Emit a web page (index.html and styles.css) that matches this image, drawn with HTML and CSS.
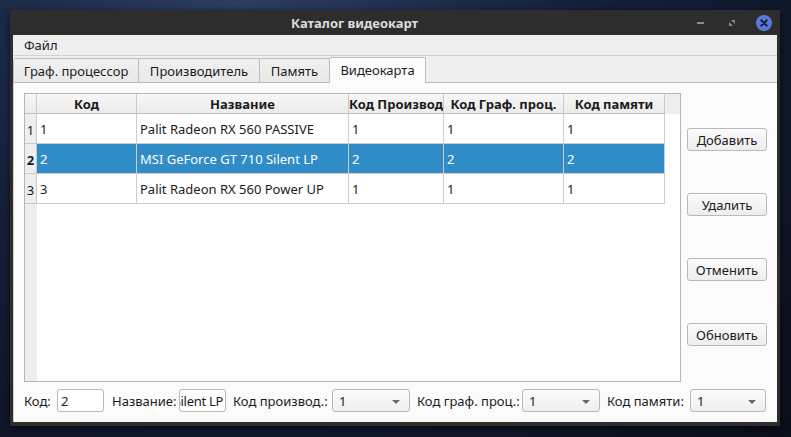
FILE: index.html
```html
<!DOCTYPE html>
<html lang="ru">
<head>
<meta charset="utf-8">
<title>Каталог видеокарт</title>
<link rel="stylesheet" href="styles.css">
</head>
<body>
<div class="window">
  <div class="titlebar">
    <span class="title">Каталог видеокарт</span>
    <div class="wctl">
      <span class="wmin"></span>
      <svg class="wmax" width="8" height="8" viewBox="0 0 8 8"><path d="M1 7 L1 3 L5 7 Z M7 1 L7 5 L3 1 Z" fill="#8a8a8a"/></svg>
      <span class="wclose"><svg width="16" height="16" viewBox="0 0 16 16"><path d="M5.2 5.2 L10.8 10.8 M10.8 5.2 L5.2 10.8" stroke="#1e2540" stroke-width="2" stroke-linecap="round"/></svg></span>
    </div>
  </div>
  <div class="client">
    <div class="menubar"><span>Файл</span></div>
    <div class="tabbar">
      <div class="tab t1">Граф. процессор</div>
      <div class="tab t2">Производитель</div>
      <div class="tab t3">Память</div>
      <div class="tab t4 active">Видеокарта</div>
    </div>
    <div class="panel">
      <div class="main">
        <div class="grid">
          <div class="hc corner"></div>
          <div class="hc">Код</div>
          <div class="hc">Название</div>
          <div class="hc">Код Производ</div>
          <div class="hc">Код Граф. проц.</div>
          <div class="hc">Код памяти</div>
          <div class="hc filler"></div>

          <div class="vh">1</div>
          <div class="c">1</div>
          <div class="c">Palit Radeon RX 560 PASSIVE</div>
          <div class="c">1</div>
          <div class="c">1</div>
          <div class="c">1</div>
          <div class="blank"></div>

          <div class="vh cur">2</div>
          <div class="c sel">2</div>
          <div class="c sel">MSI GeForce GT 710 Silent LP</div>
          <div class="c sel">2</div>
          <div class="c sel">2</div>
          <div class="c sel">2</div>
          <div class="blank"></div>

          <div class="vh">3</div>
          <div class="c">3</div>
          <div class="c">Palit Radeon RX 560 Power UP</div>
          <div class="c">1</div>
          <div class="c">1</div>
          <div class="c">1</div>
          <div class="blank"></div>
        </div>
        <div class="buttons">
          <button class="btn">Добавить</button>
          <button class="btn">Удалить</button>
          <button class="btn">Отменить</button>
          <button class="btn">Обновить</button>
        </div>
      </div>
      <div class="form">
        <label class="lbl l-code">Код:</label>
        <input class="field f-code" type="text" value="2" readonly>
        <label class="lbl l-name">Название:</label>
        <input class="field f-name" type="text" dir="rtl" value="MSI GeForce GT 710 Silent LP" readonly>
        <label class="lbl l-man">Код производ.:</label>
        <div class="combo c-man">1<span class="arrow"></span></div>
        <label class="lbl l-gpu">Код граф. проц.:</label>
        <div class="combo c-gpu">1<span class="arrow"></span></div>
        <label class="lbl l-mem">Код памяти:</label>
        <div class="combo c-mem">1<span class="arrow"></span></div>
      </div>
    </div>
  </div>
</div>
</body>
</html>
```

FILE: styles.css
```css
* { box-sizing: border-box; }

body {
  margin: 0;
  width: 791px;
  height: 437px;
  overflow: hidden;
  font-family: "Noto Sans", "Open Sans", sans-serif;
  font-size: 13px;
  color: #1b1b1b;
  background:
    radial-gradient(circle at 20% 30%, rgba(120,150,200,0.25) 0 1px, transparent 2px),
    radial-gradient(ellipse at 30% 0%, #2c3f63 0%, #15203a 45%, #0b0f1a 100%);
}

.window {
  margin: 10px 0 0 10px;
  width: 770px;
  height: 416px;
  background: #2d2d2d;
  display: flex;
  flex-direction: column;
  box-shadow: 0 2px 8px rgba(0,0,0,0.6);
}

.titlebar {
  height: 25px;
  display: flex;
  align-items: center;
  color: #dcdcdc;
  font-weight: bold;
  font-size: 13px;
}

.title { margin-left: 281px; }

.wctl {
  margin-left: auto;
  display: flex;
  align-items: center;
  padding-right: 8px;
}

.wmin {
  width: 7px;
  height: 2px;
  background: #8a8a8a;
  margin-right: 24px;
}

.wmax { margin-right: 20px; }

.wclose {
  width: 16px;
  height: 16px;
  border-radius: 50%;
  background: #5b78d8;
  display: flex;
}

.client {
  flex: 1;
  margin: 0 3px 4px 3px;
  background: #efefef;
  display: flex;
  flex-direction: column;
}

.menubar {
  height: 21px;
  padding-left: 11px;
  display: flex;
  align-items: center;
  border-bottom: 1px solid #d2d2d2;
}

.tabbar {
  height: 26px;
  display: flex;
  align-items: flex-end;
  position: relative;
  z-index: 1;
}

.tab {
  height: 24px;
  border: 1px solid #bdbdbd;
  border-bottom: none;
  background: linear-gradient(#f0f0f0, #e9e9e9);
  display: flex;
  align-items: center;
  justify-content: center;
  margin-right: -1px;
  border-radius: 2px 2px 0 0;
}

.t1 { width: 126px; }
.t2 { width: 122px; }
.t3 { width: 71px; }
.t4 { width: 97px; }

.tab.active {
  height: 26px;
  margin-bottom: -1px;
  background: #fbfbfb;
  padding-bottom: 2px;
}

.panel {
  flex: 1;
  background: #fbfbfb;
  border-top: 1px solid #b9b9b9;
  border-left: 1px solid #d0d0d0;
  padding: 10px 10px 0 10px;
  display: flex;
  flex-direction: column;
}

.main {
  display: flex;
  height: 289px;
}

.grid {
  width: 657px;
  height: 289px;
  border: 1px solid #b5b5b5;
  display: grid;
  grid-template-columns: 12px 100px 212px 95px 120px 101px 1fr;
  grid-template-rows: 20px 30px 30px 30px;
  align-content: start;
  background: linear-gradient(to right, #eeeeee 12px, #ffffff 12px);
}

.hc {
  background: linear-gradient(#f7f7f7, #ebebeb);
  border-right: 1px solid #c9c9c9;
  border-bottom: 1px solid #c0c0c0;
  font-weight: bold;
  display: flex;
  align-items: center;
  justify-content: center;
  white-space: nowrap;
  overflow: hidden;
}

.hc.filler {
  border-right: none;
  border-bottom: none;
  background: #eeeeee;
}

.vh {
  background: #eeeeee;
  border-right: 1px solid #c9c9c9;
  border-bottom: 1px solid #c9c9c9;
  display: flex;
  align-items: center;
  justify-content: center;
  padding-top: 2px;
}

.vh.cur { font-weight: bold; }

.c {
  border-right: 1px solid #cdcdcd;
  border-bottom: 1px solid #cdcdcd;
  display: flex;
  align-items: center;
  padding-left: 3px;
  white-space: nowrap;
  overflow: hidden;
  background: #ffffff;
}

.c.sel {
  background: #308cc6;
  color: #ffffff;
}

.blank { background: #ffffff; }

.buttons {
  width: 80px;
  margin-left: 6px;
  display: flex;
  flex-direction: column;
  padding-top: 35px;
  gap: 42px;
}

.btn {
  height: 23px;
  width: 80px;
  font-family: inherit;
  font-size: 13px;
  color: #1b1b1b;
  border: 1px solid #b9b9b9;
  border-radius: 3px;
  background: linear-gradient(#fbfbfb, #ededed);
  padding: 0;
}

.form {
  display: flex;
  align-items: center;
  margin-top: 6px;
  height: 25px;
}

.lbl { white-space: nowrap; }
.l-code { width: 33px; }
.l-name { width: 67px; margin-left: 8px; }
.l-man { width: 99px; margin-left: 7px; }
.l-gpu { width: 105px; margin-left: 7px; }
.l-mem { width: 83px; margin-left: 7px; }

.field {
  height: 23px;
  background: #ffffff;
  border: 1px solid #b9b9b9;
  border-radius: 3px;
  padding: 0 3px;
  margin: 0;
  font-family: inherit;
  font-size: 13px;
  color: #1b1b1b;
  outline: none;
}

.f-code { width: 47px; }
.f-name { width: 47px; padding: 0 2px 0 0; letter-spacing: -0.3px; }

.combo {
  height: 23px;
  border: 1px solid #b9b9b9;
  border-radius: 3px;
  background: linear-gradient(#fbfbfb, #efefef);
  display: flex;
  align-items: center;
  padding-left: 6px;
  position: relative;
}

.c-man { width: 78px; }
.c-gpu { width: 78px; }
.c-mem { width: 76px; }

.arrow {
  position: absolute;
  right: 9px;
  top: 10px;
  width: 0;
  height: 0;
  border-left: 4px solid transparent;
  border-right: 4px solid transparent;
  border-top: 4px solid #6a6a6a;
}
```
